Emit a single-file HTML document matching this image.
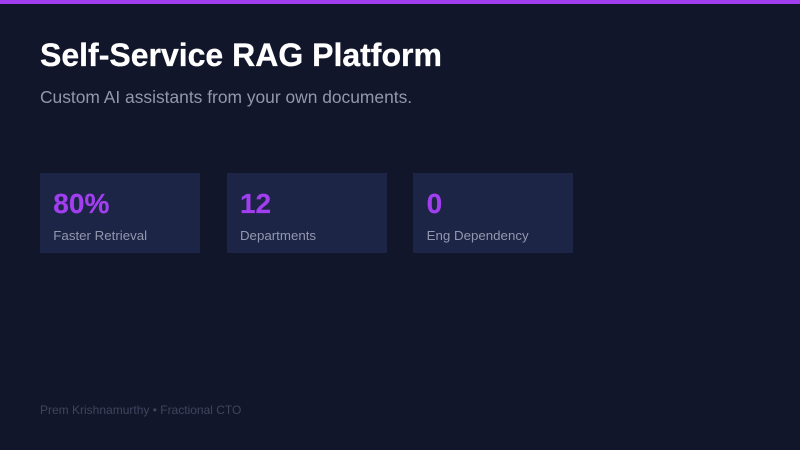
<!DOCTYPE html>
<html>
<head>
<meta charset="utf-8">
<style>
html,body{margin:0;padding:0}
body{width:800px;height:450px;overflow:hidden;position:relative;background:#12162b;font-family:"Liberation Sans",Arial,sans-serif}
.bar{position:absolute;left:0;top:0;width:800px;height:4px;background:#a13ff0}
h1{position:absolute;left:40px;top:37px;margin:0;font-size:32px;line-height:37px;font-weight:700;color:#fff;white-space:nowrap;-webkit-text-stroke:0.3px #fff}
.sub{position:absolute;left:40px;top:87px;font-size:17.4px;line-height:20px;color:#9297ae;white-space:nowrap}
.card{position:absolute;top:173px;width:160px;height:80px;background:#1c2545}
.num{position:absolute;left:13.3px;top:15px;font-size:28px;line-height:32px;font-weight:700;color:#a13ff0;white-space:nowrap;-webkit-text-stroke:0.2px #a13ff0}
.lab{position:absolute;left:13.3px;top:54.5px;font-size:13.3px;line-height:16px;color:#9297ae;white-space:nowrap}
.foot{position:absolute;left:40px;top:402.5px;font-size:12px;line-height:14px;color:#40455e;white-space:nowrap}
</style>
</head>
<body>
<div class="bar"></div>
<h1>Self-Service RAG Platform</h1>
<div class="sub">Custom AI assistants from your own documents.</div>
<div class="card" style="left:40px"><div class="num">80%</div><div class="lab">Faster Retrieval</div></div>
<div class="card" style="left:226.67px"><div class="num">12</div><div class="lab">Departments</div></div>
<div class="card" style="left:413.33px"><div class="num">0</div><div class="lab">Eng Dependency</div></div>
<div class="foot">Prem Krishnamurthy • Fractional CTO</div>
</body>
</html>
